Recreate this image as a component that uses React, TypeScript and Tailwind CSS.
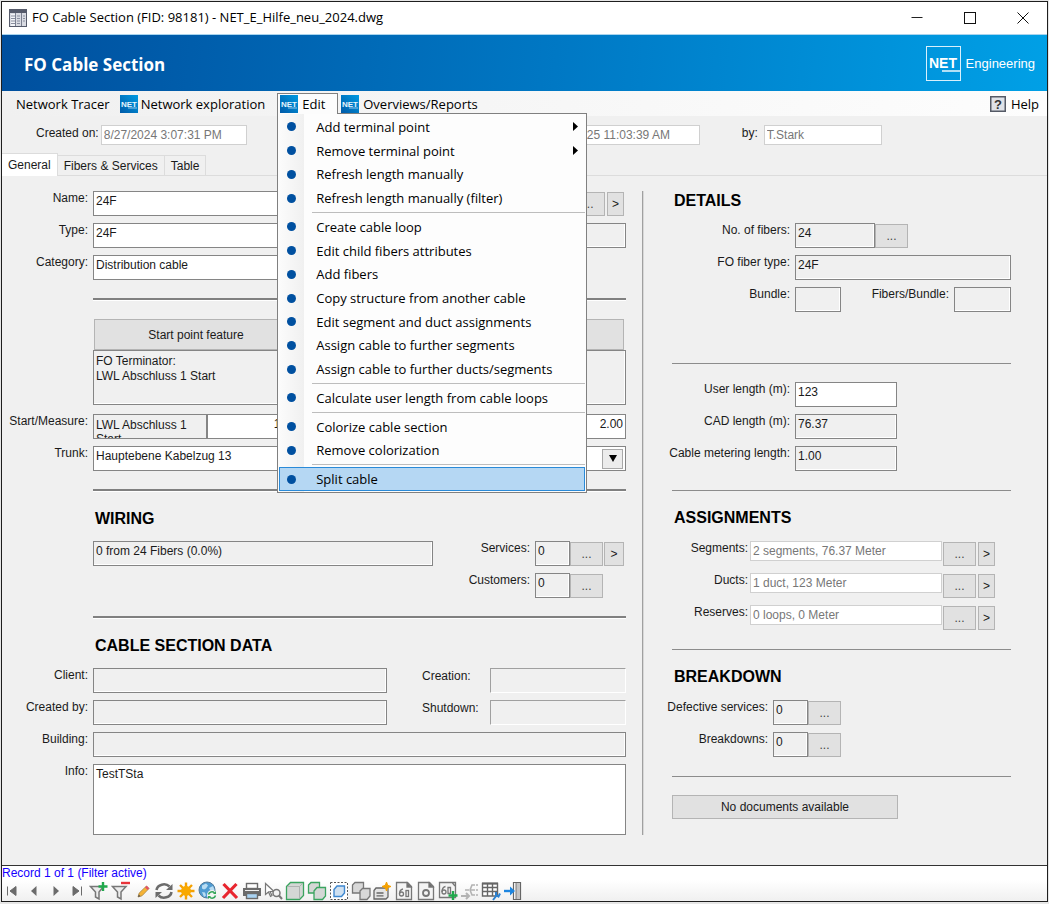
import { useState } from 'react';
import type { ReactNode } from 'react';
import clsx from 'clsx';

type Tone = 'edit' | 'locked' | 'disabled' | 'flat';

const TONES: Record<Tone, string> = {
  edit: 'h-[25px] border-[#858585] bg-white px-0.5 pb-1.5',
  locked: 'h-[25px] border-[#858585] bg-[#f0f0f0] px-0.5 pb-1.5 shadow-[inset_-1px_-1px_0_#fff]',
  disabled: 'h-5 border-[#d0d0d0] bg-white px-0.5 text-[#777777]',
  flat: 'h-[25px] border-t-[#a0a0a0] border-l-[#a0a0a0] border-r-white border-b-white bg-[#f0f0f0] px-0.5',
};

interface FieldProps {
  id: string;
  value?: string;
  tone?: Tone;
  className?: string;
  label?: string;
}

function Field({ id, value = '', tone = 'locked', className, label }: FieldProps) {
  return (
    <input
      id={id}
      aria-label={label}
      defaultValue={value}
      readOnly={tone !== 'edit'}
      className={clsx('min-w-0 border outline-none', TONES[tone], className)}
    />
  );
}

function Label({ htmlFor, className, children }: { htmlFor: string; className: string; children: ReactNode }) {
  return (
    <label htmlFor={htmlFor} className={clsx('shrink-0 leading-[14px] whitespace-nowrap', className)}>
      {children}
    </label>
  );
}

function MoreButton({ label }: { label: string }) {
  return (
    <button
      aria-label={label}
      className="mt-px h-6 w-[33px] shrink-0 border border-[#b4b4b4] bg-[#e1e1e1] text-[#444444] hover:bg-[#e5f1fb]"
    >
      ...
    </button>
  );
}

function GoButton({ label, className }: { label: string; className: string }) {
  return (
    <button
      aria-label={label}
      className={clsx('mt-px h-6 shrink-0 border border-[#b4b4b4] bg-[#e1e1e1] hover:bg-[#e5f1fb]', className)}
    >
      &gt;
    </button>
  );
}

function Heading({ className, children }: { className?: string; children: ReactNode }) {
  return <h2 className={clsx('text-base leading-5 font-bold text-black', className)}>{children}</h2>;
}

function LeftRule() {
  return <hr className="mt-[18px] ml-[91px] h-[3px] border-t-2 border-b border-t-[#808080] border-b-white" />;
}

function RightRule({ className }: { className: string }) {
  return <hr className={clsx('ml-7 border-t border-[#8c8c8c]', className)} />;
}

function NetIcon() {
  return (
    <svg width="18" height="18" viewBox="0 0 18 18" aria-hidden="true" className="shrink-0">
      <defs>
        <linearGradient id="net" x1="0" y1="1" x2="1" y2="0">
          <stop offset="0" stopColor="#005aa8" />
          <stop offset="1" stopColor="#009be2" />
        </linearGradient>
      </defs>
      <rect width="18" height="18" fill="url(#net)" />
      <text x="1" y="12" fontSize="8" fontWeight="700" fontFamily="Liberation Sans, Arial, sans-serif" fill="#e6f4fc">
        NET
      </text>
      <path d="M8 13h9" stroke="#b5dcf4" strokeWidth="0.8" />
    </svg>
  );
}

function FormIcon() {
  return (
    <svg width="18" height="18" viewBox="0 0 18 18" aria-hidden="true">
      <rect x="0.5" y="0.5" width="17" height="17" fill="#d9dbe2" stroke="#565b6b" />
      <rect x="1" y="1" width="16" height="3" fill="#565b6b" />
      <rect x="2" y="5" width="4" height="12" fill="#f3f4f7" />
      <path d="M6.5 4v13M12.5 4v13" stroke="#7b8090" />
      <path d="M2 7h4M2 9.5h4M2 12h4M2 14.5h4M8 7h3M8 9.5h3M8 12h3M8 14.500h3M14 7h2M14 9.5h2M14 12h2" stroke="#8a8f9f" />
    </svg>
  );
}

const GREY = '#6b6b6b';

const TOOLS: { name: string; icon: ReactNode }[] = [
  { name: 'First record', icon: <path d="M5.5 5.5v9M14 5.5L8 10l6 4.5z" fill={GREY} stroke={GREY} /> },
  { name: 'Previous record', icon: <path d="M12.5 5L7 10l5.5 5z" fill={GREY} /> },
  { name: 'Next record', icon: <path d="M7.5 5L13 10l-5.500 5z" fill={GREY} /> },
  { name: 'Last record', icon: <path d="M14.5 5.5v9M6 5.5l6 4.5l-6 4.5z" fill={GREY} stroke={GREY} /> },
  {
    name: 'Set filter',
    icon: (
      <>
        <path d="M1.5 5.5h13l-4.5 5.5v7l-3.5-2v-5z" fill="#ececec" stroke="#777" strokeWidth="1.5" />
        <path d="M14 1v9M9.5 5.5h9" stroke="#20a84c" strokeWidth="2.4" />
      </>
    ),
  },
  {
    name: 'Remove filter',
    icon: (
      <>
        <path d="M1.5 5.5h13.500l-5 5.5v7l-3.5-2v-5z" fill="#ececec" stroke="#777" strokeWidth="1.5" />
        <path d="M10 2h9" stroke="#e8333a" strokeWidth="2.4" />
      </>
    ),
  },
  {
    name: 'Edit record',
    icon: (
      <>
        <path d="M5 16l1.2-4 7.3-7 2.5 2.5-7 7.3z" fill="#f5b335" stroke="#a88545" strokeWidth="0.8" />
        <path d="M12 6.5l1.7-1.7 2.5 2.5-1.7 1.7z" fill="#e0526a" />
        <path d="M5 16l0.8-2.5 1.7 1.7z" fill="#555" />
      </>
    ),
  },
  {
    name: 'Refresh',
    icon: (
      <>
        <path d="M2.5 9a7.5 6.5 0 0 1 13-3.5M17.5 11a7.5 6.5 0 0 1-13 3.5" fill="none" stroke={GREY} strokeWidth="2.6" />
        <path d="M18.5 3v6h-6.5zM1.5 17v-6h6.5z" fill={GREY} />
      </>
    ),
  },
  {
    name: 'New record',
    icon: (
      <>
        <path d="M10 1.5v17M1.5 10h17M4 4l12 12M16 4L4 16" stroke="#f5a100" strokeWidth="2.4" />
        <circle cx="10" cy="10" r="5" fill="#f9a900" />
      </>
    ),
  },
  {
    name: 'Map refresh',
    icon: (
      <>
        <circle cx="9" cy="9" r="8" fill="#4f9bd2" stroke="#557b99" />
        <path d="M4 4.5l4-2 2 2-2 3-2 1-2-1zM11 7l4-2 1.5 4-3 2zM4 11l3 0.5 1 3-2 1.5z" fill="#b9dcf2" />
        <circle cx="14" cy="14" r="5" fill="#f4f4f4" />
        <path d="M10.5 13.5a3.5 3.5 0 0 1 6-1.5M17.5 14.5a3.5 3.5 0 0 1-6 1.5" fill="none" stroke="#35a65a" strokeWidth="1.5" />
        <path d="M18 10v3h-3zM10 18v-3h3z" fill="#35a65a" />
      </>
    ),
  },
  { name: 'Delete record', icon: <path d="M3.5 3l13.5 14M16.5 3L3 17" stroke="#e8252e" strokeWidth="3.2" /> },
  {
    name: 'Print',
    icon: (
      <>
        <rect x="4.5" y="2.5" width="11" height="5" fill="#fff" stroke={GREY} strokeWidth="1.4" />
        <path d="M1 7h18v8h-3v-3h-12v3h-3z" fill={GREY} />
        <path d="M3 9.5h14" stroke="#f0f0f0" />
        <rect x="4.5" y="12.5" width="11" height="5" fill="#a9d3f2" stroke={GREY} strokeWidth="1.4" />
      </>
    ),
  },
  {
    name: 'Select and zoom',
    icon: (
      <>
        <path d="M2.5 2.5l8.5 8h-4l2 4-1.5 0.8-2-4.3-3 2.5z" fill="#fff" stroke="#777" strokeWidth="1.2" />
        <circle cx="13.5" cy="12" r="3.5" fill="#f4f4f4" stroke="#777" strokeWidth="1.5" />
        <path d="M16 14.5l3 3.5" stroke="#777" strokeWidth="2" />
      </>
    ),
  },
  {
    name: 'Highlight',
    icon: (
      <g stroke="#3aa45f" strokeWidth="1.3">
        <path d="M1.5 5.5l4-4h13v13l-4 4h-13z" fill="#d4d7d5" />
        <path d="M2 5.5h12.5v12.5M14.5 5.5l3.5-3.5" fill="none" stroke="#a5aaa7" strokeWidth="0.8" />
      </g>
    ),
  },
  {
    name: 'Highlight add',
    icon: (
      <g fill="#d4d7d5" stroke="#3aa45f" strokeWidth="1.3">
        <path d="M1.5 4l2.5-2.5h8.5v8l-2.5 2.5h-8.5z" />
        <path d="M7 10l3-3.5h8.5v8.500l-3 3.5h-8.5z" />
      </g>
    ),
  },
  {
    name: 'Highlight selection',
    icon: (
      <>
        <rect x="1.5" y="1.5" width="17" height="17" fill="#fff" stroke="#555" strokeDasharray="2 1.5" />
        <path d="M5 8.5l3-3.5h7.5v7l-3 3.5h-7.5z" fill="#cfe0f0" stroke="#3e87cf" strokeWidth="1.4" />
      </>
    ),
  },
  {
    name: 'Highlight remove',
    icon: (
      <g fill="#d8d8d8" stroke="#777" strokeWidth="1.3">
        <path d="M1.5 4l2.5-2.5h8.5v8l-2.5 2.5h-8.5z" />
        <path d="M9 10l2.5-2.5h7.5v7.500l-3 3.5h-7z" />
      </g>
    ),
  },
  {
    name: 'Label placement',
    icon: (
      <>
        <path d="M2 9.5l2-2.5h12v9l-2 2h-12z" fill="#e4e4e4" stroke="#666" strokeWidth="1.3" />
        <path d="M4.5 12h7M4.5 14.8h7" stroke="#666" strokeWidth="1.3" />
        <path d="M14.5 1l1.2 3.3 3.3 1.2-3.3 1.2-1.2 3.3-1.2-3.3-3.3-1.2 3.3-1.2z" fill="#f5a100" stroke="#f5a100" />
      </>
    ),
  },
  {
    name: 'Document group',
    icon: (
      <g fill="none" stroke="#777" strokeWidth="1.3">
        <path d="M2.5 1.5h11l4 4v13h-15z" fill="#f4f4f4" />
        <path d="M13 2v4h4z" fill="#666" />
        <circle cx="7.5" cy="13" r="2" />
        <path d="M5.500 13c0-3.500 1-4.500 3.500-5" />
        <rect x="12" y="9.5" width="2.500" height="6" />
      </g>
    ),
  },
  {
    name: 'Document',
    icon: (
      <g fill="none" stroke="#777" strokeWidth="1.3">
        <path d="M2.5 1.5h11l4 4v13h-15z" fill="#f4f4f4" />
        <path d="M13 2v4h4z" fill="#666" />
        <circle cx="10" cy="12" r="3" strokeWidth="1.8" />
      </g>
    ),
  },
  {
    name: 'Add document',
    icon: (
      <g fill="none" stroke="#777" strokeWidth="1.3">
        <path d="M1.5 1.5h16v15h-16z" fill="#f4f4f4" />
        <circle cx="6" cy="11" r="2" />
        <path d="M4 11c0-3.500 1-5 3.500-5.500M10 6.500h2.500v6h-2.500zM14.5 2l2.500 3" />
        <path d="M15 10v9M10.500 14.500h9" stroke="#20a84c" strokeWidth="2.4" />
      </g>
    ),
  },
  {
    name: 'Topology',
    icon: (
      <g fill="none" stroke="#b3b3b3" strokeWidth="1.6">
        <path d="M2 15h8M7 12l3 3-3 3" strokeWidth="2" />
        <path d="M6 9h4M11 9l2-5h3M11 9h5M11 9l2 5h3" />
        <path d="M17 4h2M17 9h2M17 14h2" />
      </g>
    ),
  },
  {
    name: 'Table settings',
    icon: (
      <>
        <path d="M1.5 2.5h15v12.5h-15zM1.5 6.500h15M1.500 10.500h15M6.500 3v12M11.500 3v12" fill="#fff" stroke="#666" strokeWidth="1.4" />
        <path d="M1 2.5h16" stroke="#666" strokeWidth="2" />
        <path d="M12 19l4-5M15 11v3l2.500 1.500 1.500-3" fill="none" stroke="#2a80d0" strokeWidth="2" />
      </>
    ),
  },
  {
    name: 'Close form',
    icon: (
      <>
        <path d="M10.5 1.500h7v17h-7z" fill="#fff" stroke="#666" strokeWidth="1.2" />
        <path d="M13 2h4v16h-4z" fill="#c4c4c4" />
        <path d="M13 2v16" stroke="#777" />
        <path d="M1 10h8" stroke="#1e86e0" strokeWidth="2.4" />
        <path d="M7 5.5l5 4.5-5 4.5z" fill="#1e86e0" />
      </>
    ),
  },
];

interface MenuEntry {
  label: string;
  submenu?: boolean;
}

const EDIT_MENU: MenuEntry[][] = [
  [
    { label: 'Add terminal point', submenu: true },
    { label: 'Remove terminal point', submenu: true },
    { label: 'Refresh length manually' },
    { label: 'Refresh length manually (filter)' },
  ],
  [
    { label: 'Create cable loop' },
    { label: 'Edit child fibers attributes' },
    { label: 'Add fibers' },
    { label: 'Copy structure from another cable' },
    { label: 'Edit segment and duct assignments' },
    { label: 'Assign cable to further segments' },
    { label: 'Assign cable to further ducts/segments' },
  ],
  [{ label: 'Calculate user length from cable loops' }],
  [{ label: 'Colorize cable section' }, { label: 'Remove colorization' }],
  [{ label: 'Split cable' }],
];

function EditMenu({ active, onHover }: { active: string; onHover: (label: string) => void }) {
  return (
    <div
      role="menu"
      className="absolute top-[19px] -left-px z-20 flex h-[380px] w-[310px] flex-col border border-[#808080] bg-[linear-gradient(90deg,#fcfcfc_0,#f0f0f0_26px,#fdfdfd_26px)] p-px"
    >
      {EDIT_MENU.map((group, i) => (
        <div key={group[0].label} className="contents">
          {i > 0 && <div className="my-0.5 ml-[33px] h-px shrink-0 bg-[#bdbdbd]" />}
          {group.map(({ label, submenu }) => (
            <button
              key={label}
              role="menuitem"
              onMouseEnter={() => onHover(label)}
              className={clsx(
                'flex min-h-0 flex-1 items-center border pr-1.5 pl-[7px] text-left',
                active === label ? 'border-[#2a8ad8] bg-[#b5d7f3]' : 'border-transparent'
              )}
            >
              <span className="mr-5 size-[9px] shrink-0 rounded-full bg-[#0050a0]" />
              <span className="flex-1 whitespace-nowrap">{label}</span>
              {submenu && (
                <svg width="5" height="9" viewBox="0 0 5 9" aria-hidden="true">
                  <path d="M0 0l5 4.5-5 4.5z" fill="#000" />
                </svg>
              )}
            </button>
          ))}
        </div>
      ))}
    </div>
  );
}

function TitleBar() {
  return (
    <header>
      <div className="flex h-8 items-center gap-[5px] bg-white pl-[7px] font-['Open_Sans','Noto_Sans',sans-serif] text-[13px]">
        <FormIcon />
        <h1 className="flex-1 whitespace-nowrap text-black">FO Cable Section (FID: 98181) - NET_E_Hilfe_neu_2024.dwg</h1>
        <div className="flex pr-[15px]">
          <button aria-label="Minimize" className="flex w-[53px] justify-center">
            <svg width="12" height="12" viewBox="0 0 12 12">
              <path d="M0.5 5.5h11" stroke="#222" />
            </svg>
          </button>
          <button aria-label="Maximize" className="flex w-[53px] justify-center">
            <svg width="12" height="12" viewBox="0 0 12 12">
              <rect x="0.5" y="0.5" width="11" height="11" fill="none" stroke="#111" />
            </svg>
          </button>
          <button aria-label="Close" className="ml-[18px] flex w-[18px] justify-center">
            <svg width="12" height="12" viewBox="0 0 12 12">
              <path d="M0.5 0.5l11 11M11.5 0.5l-11 11" stroke="#111" />
            </svg>
          </button>
        </div>
      </div>
      <div className="flex h-[57px] items-center justify-between border-t border-[#a8d4ee] bg-[linear-gradient(95deg,#004f9e_0%,#0078c4_53%,#00a0e6_100%)] pr-3 pl-[22px] text-white">
        <span className="pt-1 font-['Open_Sans','Noto_Sans',sans-serif] text-[17px] font-bold">FO Cable Section</span>
        <div className="flex items-center gap-[5px]">
          <svg width="35" height="35" viewBox="0 0 35 35" aria-hidden="true">
            <rect x="0.5" y="0.5" width="34" height="34" fill="none" stroke="#d9f0fc" />
            <text x="3" y="22" fontSize="14" fontWeight="700" fontFamily="Liberation Sans, Arial, sans-serif" fill="#fff">
              NET
            </text>
            <path d="M16 25h18" stroke="#fff" strokeWidth="1.4" />
          </svg>
          <span className="pt-0.5 text-[13px]">Engineering</span>
        </div>
      </div>
    </header>
  );
}

function MenuBar() {
  const [open, setOpen] = useState(true);
  const [active, setActive] = useState('Split cable');

  return (
    <nav className="flex h-[25px] items-center bg-[linear-gradient(90deg,#f0f0f0,#fdfdfd)] pr-2 pl-3.5 font-['Open_Sans','Noto_Sans',sans-serif] text-[13px] leading-[18px] text-black">
      <button className="whitespace-nowrap">Network Tracer</button>
      <button className="ml-2.5 flex items-center gap-[3px] whitespace-nowrap">
        <NetIcon />
        Network exploration
      </button>
      <div className="relative ml-3 mt-0.5 self-start border border-b-0 border-[#808080] bg-[#fcfcfc]">
        <button
          aria-haspopup="menu"
          aria-expanded={open}
          onClick={() => setOpen(!open)}
          className="relative z-30 flex h-5 w-[59px] items-center gap-1 bg-[#fcfcfc] pl-0.5"
        >
          <NetIcon />
          Edit
        </button>
        {open && <EditMenu active={active} onHover={setActive} />}
      </div>
      <button className="ml-[3px] flex items-center gap-1 whitespace-nowrap">
        <NetIcon />
        Overviews/Reports
      </button>
      <button className="ml-auto flex items-center gap-[5px]">
        <svg width="16" height="16" viewBox="0 0 16 16" aria-hidden="true">
          <rect x="0.75" y="0.75" width="14.5" height="14.5" fill="#dfe2e8" stroke="#555a66" strokeWidth="1.5" />
          <text x="8" y="12.5" textAnchor="middle" fontSize="13" fontWeight="700" fontFamily="Liberation Sans, Arial, sans-serif" fill="#333">
            ?
          </text>
        </svg>
        Help
      </button>
    </nav>
  );
}

function RecordInfo() {
  return (
    <div className="flex items-start pt-[9px] pl-[34px]">
      <Label htmlFor="created-on" className="mt-px">
        Created on:
      </Label>
      <Field id="created-on" tone="disabled" value="8/27/2024 3:07:31 PM" className="ml-0.5 w-[146px]" />
      <Field
        id="modified-on"
        label="Modified on"
        tone="disabled"
        value="1/15/2025 11:03:39 AM"
        className="ml-[297px] w-[156px]"
      />
      <Label htmlFor="modified-by" className="mt-px ml-[42px]">
        by:
      </Label>
      <Field id="modified-by" tone="disabled" value="T.Stark" className="ml-[6px] w-[118px]" />
    </div>
  );
}

function Tabs() {
  const [tab, setTab] = useState('General');

  return (
    <div role="tablist" className="mt-2 flex items-end border-b border-[#dcdcdc]">
      {['General', 'Fibers & Services', 'Table'].map((name) => (
        <button
          key={name}
          role="tab"
          aria-selected={tab === name}
          onClick={() => setTab(name)}
          className={clsx(
            'border-t border-r border-[#dcdcdc] px-1.5 whitespace-nowrap',
            tab === name ? '-mb-px h-[23px] bg-white' : 'h-5 bg-[#f0f0f0]'
          )}
        >
          {name}
        </button>
      ))}
    </div>
  );
}

function CableForm() {
  const label = 'w-[86px] mr-[5px] text-right';

  return (
    <section className="min-w-0 flex-1 pt-[15px] pr-4">
      <div className="flex flex-col gap-[7px]">
        <div className="flex items-start">
          <Label htmlFor="name" className={label}>Name:</Label>
          <Field id="name" tone="edit" value="24F" className="flex-1" />
          <MoreButton label="Choose name" />
          <GoButton label="Go to name" className="mr-0.5 ml-0.5 w-[17px]" />
        </div>
        <div className="flex items-start">
          <Label htmlFor="type" className={label}>Type:</Label>
          <Field id="type" tone="edit" value="24F" className="w-[380px] shrink" />
          <Field id="type-info" label="Type info" className="flex-1" />
        </div>
        <div className="flex items-start">
          <Label htmlFor="category" className={label}>Category:</Label>
          <Field id="category" tone="edit" value="Distribution cable" className="w-[380px] shrink" />
        </div>
      </div>

      <LeftRule />

      <div className="mt-[18px] ml-[91px]">
        <div className="flex h-[31px] justify-between pr-0.5 pl-px">
          <button className="w-[204px] border border-[#b4b4b4] bg-[#e1e1e1]">Start point feature</button>
          <button aria-label="End point feature" className="w-[204px] border border-[#b4b4b4] bg-[#e1e1e1]" />
        </div>
        <div className="flex justify-between gap-4">
          <textarea
            aria-label="Start point"
            readOnly
            defaultValue={'FO Terminator:\nLWL Abschluss 1 Start'}
            className="h-[55px] w-0 flex-1 resize-none border border-[#858585] bg-[#f0f0f0] px-0.5 pt-[3px] leading-[15px] shadow-[inset_-1px_-1px_0_#fff] outline-none"
          />
          <textarea
            aria-label="End point"
            readOnly
            className="h-[55px] w-0 flex-1 resize-none border border-[#858585] bg-[#f0f0f0] px-0.5 shadow-[inset_-1px_-1px_0_#fff] outline-none"
          />
        </div>
      </div>

      <div className="mt-[9px] flex flex-col gap-[7px]">
        <div className="flex items-start">
          <Label htmlFor="start" className={label}>Start/Measure:</Label>
          <textarea
            id="start"
            readOnly
            defaultValue={'LWL Abschluss 1\nStart'}
            className="h-[25px] w-[114px] shrink-0 resize-none overflow-hidden border border-[#858585] bg-[#f0f0f0] px-0.5 pt-[3px] leading-[14px] outline-none"
          />
          <Field id="start-measure" label="Start measure" tone="edit" value="1.00" className="w-[93px] text-right" />
          <Field id="end-measure" label="End measure" tone="edit" value="2.00" className="ml-auto w-[93px] text-right" />
        </div>
        <div className="flex items-start">
          <Label htmlFor="trunk" className={label}>Trunk:</Label>
          <div className="flex h-[25px] flex-1 items-center border border-[#858585] bg-white">
            <input id="trunk" defaultValue="Hauptebene Kabelzug 13" className="min-w-0 flex-1 px-0.5 pb-1.5 outline-none" />
            <button
              aria-label="Open trunk list"
              className="mr-0.5 flex h-5 w-[21px] items-center justify-center border border-[#a8a8a8] bg-[#ececec]"
            >
              <svg width="8" height="7" viewBox="0 0 8 7" aria-hidden="true">
                <path d="M0 0h8L4 7z" fill="#000" />
              </svg>
            </button>
          </div>
        </div>
      </div>

      <LeftRule />
      <Heading className="mt-[17px] pl-[93px]">WIRING</Heading>

      <div className="mt-3 flex items-start pr-0.5 pl-[91px]">
        <Field id="wiring" label="Wiring" value="0 from 24 Fibers (0.0%)" className="flex-1" />
        <div className="flex flex-col gap-[7px]">
          <div className="flex items-start">
            <Label htmlFor="services" className="mr-[5px] w-[97px] text-right">Services:</Label>
            <Field id="services" value="0" className="w-[35px]" />
            <MoreButton label="List services" />
            <GoButton label="Go to services" className="ml-px w-[20px]" />
          </div>
          <div className="flex items-start">
            <Label htmlFor="customers" className="mr-[5px] w-[97px] text-right">Customers:</Label>
            <Field id="customers" value="0" className="w-[35px]" />
            <MoreButton label="List customers" />
          </div>
        </div>
      </div>

      <LeftRule />
      <Heading className="mt-[17px] pl-[93px]">CABLE SECTION DATA</Heading>

      <div className="mt-3 flex flex-col gap-[7px]">
        <div className="flex items-start">
          <Label htmlFor="client" className={label}>Client:</Label>
          <Field id="client" className="flex-1" />
          <Label htmlFor="creation" className="mt-px ml-[35px] w-[68px]">Creation:</Label>
          <Field id="creation" tone="flat" className="w-[136px]" />
        </div>
        <div className="flex items-start">
          <Label htmlFor="created-by" className={label}>Created by:</Label>
          <Field id="created-by" className="flex-1" />
          <Label htmlFor="shutdown" className="mt-px ml-[35px] w-[68px]">Shutdown:</Label>
          <Field id="shutdown" tone="flat" className="w-[136px]" />
        </div>
        <div className="flex items-start">
          <Label htmlFor="building" className={label}>Building:</Label>
          <Field id="building" className="flex-1" />
        </div>
        <div className="flex items-start">
          <Label htmlFor="info" className={label}>Info:</Label>
          <textarea
            id="info"
            defaultValue="TestTSta"
            className="h-[71px] min-w-0 flex-1 resize-none border border-[#858585] bg-white px-0.5 pt-0.5 leading-[14px] outline-none"
          />
        </div>
      </div>
    </section>
  );
}

const ASSIGNMENTS = [
  { id: 'segments', label: 'Segments:', value: '2 segments, 76.37 Meter' },
  { id: 'ducts', label: 'Ducts:', value: '1 duct, 123 Meter' },
  { id: 'reserves', label: 'Reserves:', value: '0 loops, 0 Meter' },
];

function DetailsPanel() {
  const label = 'w-[146px] mr-[5px] text-right';

  return (
    <section className="w-[367px] shrink-0 pt-[15px]">
      <Heading className="pl-[30px]">DETAILS</Heading>
      <div className="mt-3 flex flex-col gap-[7px]">
        <div className="flex items-start">
          <Label htmlFor="fibers" className={label}>No. of fibers:</Label>
          <Field id="fibers" value="24" className="w-[80px]" />
          <MoreButton label="List fibers" />
        </div>
        <div className="flex items-start">
          <Label htmlFor="fiber-type" className={label}>FO fiber type:</Label>
          <Field id="fiber-type" value="24F" className="flex-1" />
        </div>
        <div className="flex items-start">
          <Label htmlFor="bundle" className={label}>Bundle:</Label>
          <Field id="bundle" className="w-[46px]" />
          <Label htmlFor="fibers-bundle" className="mr-[5px] ml-auto">Fibers/Bundle:</Label>
          <Field id="fibers-bundle" className="w-[57px]" />
        </div>
      </div>

      <RightRule className="mt-[51px]" />
      <div className="mt-[18px] flex flex-col gap-[7px]">
        <div className="flex items-start">
          <Label htmlFor="user-length" className={label}>User length (m):</Label>
          <Field id="user-length" tone="edit" value="123" className="w-[102px]" />
        </div>
        <div className="flex items-start">
          <Label htmlFor="cad-length" className={label}>CAD length (m):</Label>
          <Field id="cad-length" value="76.37" className="w-[102px]" />
        </div>
        <div className="flex items-start">
          <Label htmlFor="metering-length" className={label}>Cable metering length:</Label>
          <Field id="metering-length" value="1.00" className="w-[102px]" />
        </div>
      </div>

      <RightRule className="mt-[19px]" />
      <Heading className="mt-[17px] pl-[30px]">ASSIGNMENTS</Heading>
      <div className="mt-[13px] flex flex-col gap-[7px]">
        {ASSIGNMENTS.map(({ id, label: text, value }) => (
          <div key={id} className="flex items-start pr-4">
            <Label htmlFor={id} className="mr-0.5 w-[104px] text-right">{text}</Label>
            <Field id={id} tone="disabled" value={value} className="mr-px flex-1" />
            <MoreButton label={`List ${id}`} />
            <GoButton label={`Go to ${id}`} className="ml-0.5 w-[17px]" />
          </div>
        ))}
      </div>

      <RightRule className="mt-[19px]" />
      <Heading className="mt-[17px] pl-[30px]">BREAKDOWN</Heading>
      <div className="mt-[13px] flex flex-col gap-[7px]">
        <div className="flex items-start">
          <Label htmlFor="defective" className="mr-[5px] w-[124px] text-right">Defective services:</Label>
          <Field id="defective" value="0" className="w-[35px]" />
          <MoreButton label="List defective services" />
        </div>
        <div className="flex items-start">
          <Label htmlFor="breakdowns" className="mr-[5px] w-[124px] text-right">Breakdowns:</Label>
          <Field id="breakdowns" value="0" className="w-[35px]" />
          <MoreButton label="List breakdowns" />
        </div>
      </div>

      <RightRule className="mt-[19px]" />
      <button className="mt-[18px] ml-7 h-6 w-[226px] border border-[#b4b4b4] bg-[#e1e1e1]">
        No documents available
      </button>
    </section>
  );
}

function StatusBar() {
  return (
    <footer className="mt-auto border-t border-[#333333] bg-[linear-gradient(180deg,#fff,#fff_40%,#f0f0f0)]">
      <p className="leading-[15px] text-[#1400ff]">Record 1 of 1 (Filter active)</p>
      <div className="flex w-[521px] justify-between">
        {TOOLS.map(({ name, icon }) => (
          <button key={name} aria-label={name} title={name} className="size-5 hover:bg-[#d8eaf9]">
            <svg width="20" height="20" viewBox="0 0 20 20">
              {icon}
            </svg>
          </button>
        ))}
      </div>
    </footer>
  );
}

export default function App() {
  return (
    <div className="flex min-h-screen flex-col bg-[#e6e6e6] px-px pt-px pb-0.5 font-['Liberation_Sans',Arial,sans-serif] text-xs text-[#1a1a1a]">
      <div className="flex flex-1 flex-col border border-[#1e1e1e] bg-[#f0f0f0]">
        <TitleBar />
        <MenuBar />
        <RecordInfo />
        <Tabs />
        <main className="flex pr-9 pb-6">
          <CableForm />
          <div className="mt-[15px] w-0.5 shrink-0 border-r border-l border-r-[#d8d8d8] border-l-[#a0a0a0]" />
          <DetailsPanel />
        </main>
        <StatusBar />
      </div>
    </div>
  );
}
